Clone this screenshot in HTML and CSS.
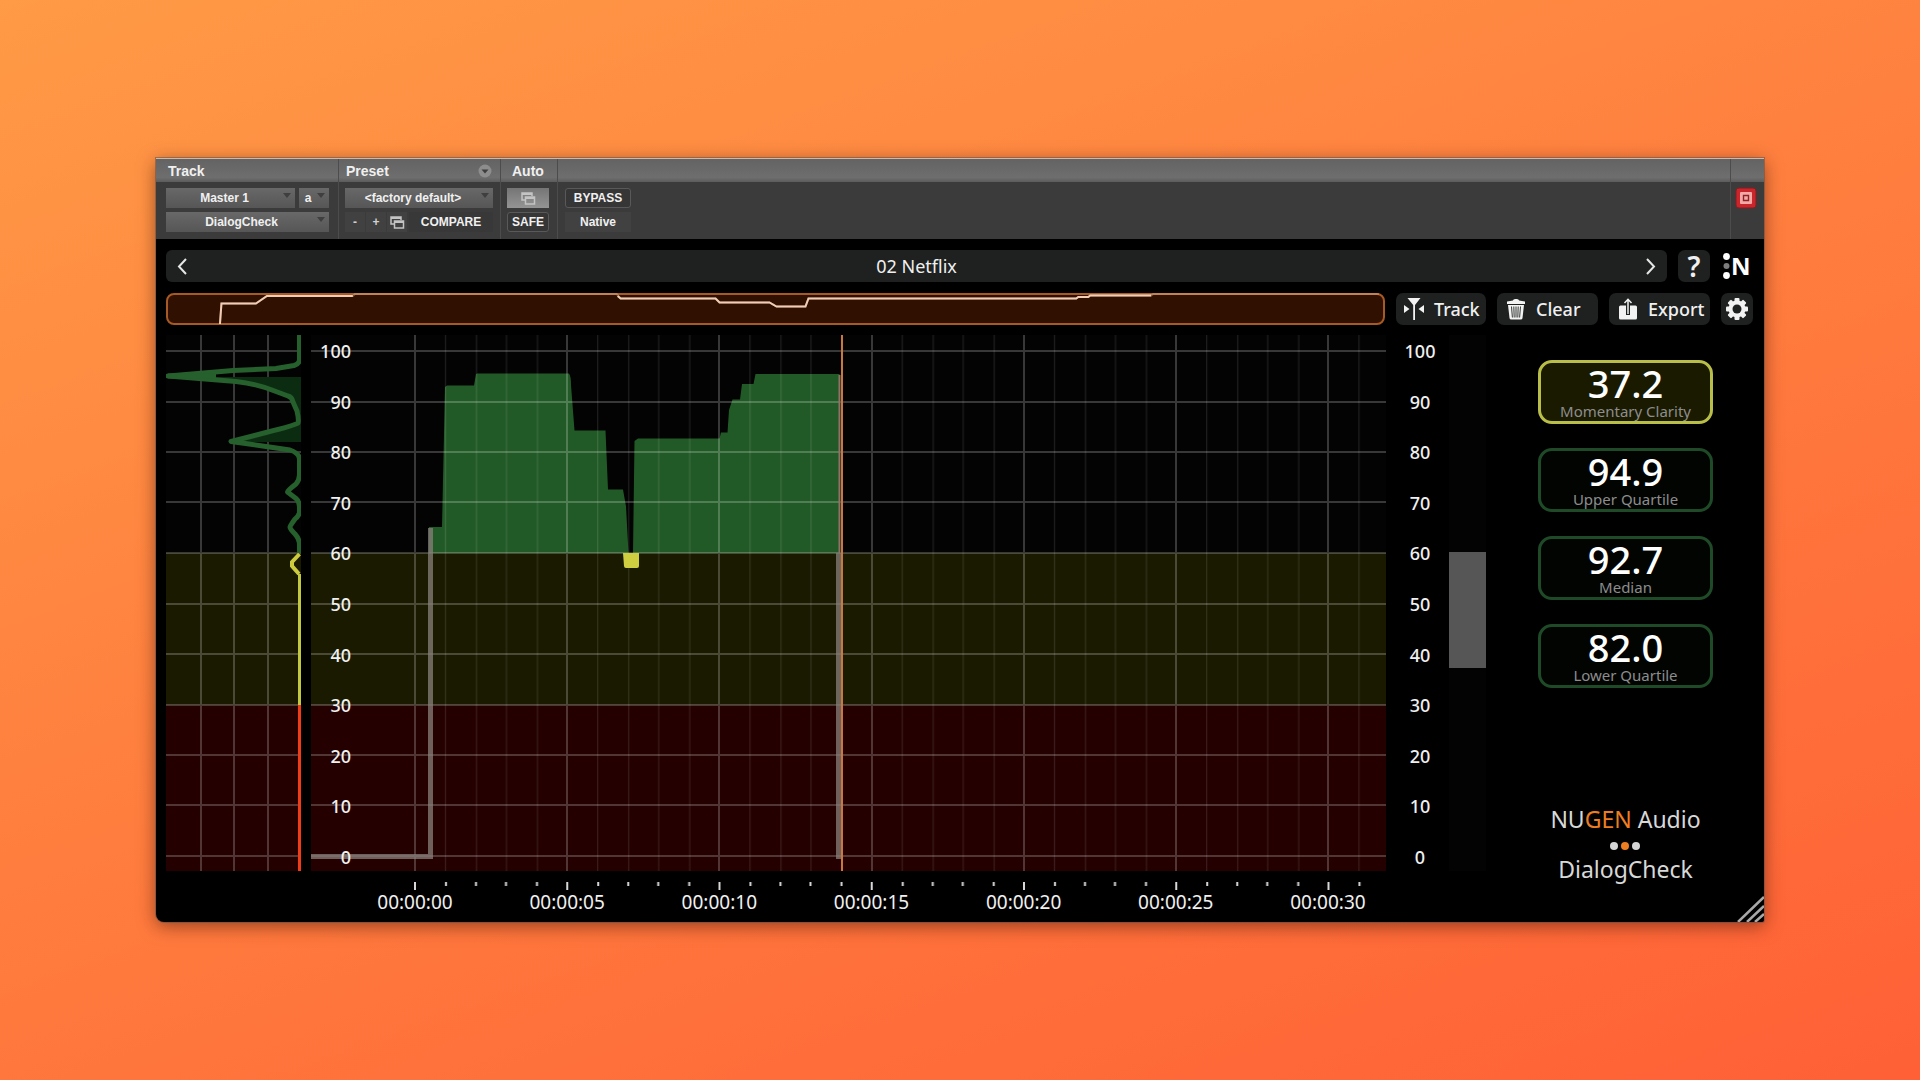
FILE: index.html
```html
<!DOCTYPE html>
<html lang="en">
<head>
<meta charset="utf-8">
<title>DialogCheck</title>
<link rel="stylesheet" href="styles.css">
</head>
<body>
<main class="window">
  <header class="host">
    <section class="host-col host-track">
      <h2 class="host-title">Track</h2>
      <div class="host-body">
        <div class="host-row">
          <span class="pick pick-wide"><select class="host-select" aria-label="Track name"><option>Master 1</option></select></span>
          <span class="pick pick-small"><select class="host-select" aria-label="Insert slot"><option>a</option></select></span>
        </div>
        <div class="host-row">
          <span class="pick pick-wide"><select class="host-select" aria-label="Plug-in"><option>DialogCheck</option></select></span>
        </div>
      </div>
    </section>
    <section class="host-col host-preset">
      <h2 class="host-title">Preset
        <button class="round" aria-label="Preset menu"><svg width="14" height="14" viewBox="0 0 14 14"><circle cx="7" cy="7" r="6.5" fill="#8d8d8d"/><path d="M3.5 5.5h7L7 9.5z" fill="#3d3d3d"/></svg></button>
      </h2>
      <div class="host-body">
        <div class="host-row">
          <span class="pick pick-wide"><select class="host-select" aria-label="Preset"><option>&lt;factory default&gt;</option></select></span>
        </div>
        <div class="host-row host-row-tight">
          <button class="flat step">-</button>
          <button class="flat step">+</button>
          <button class="flat copy" aria-label="Copy settings"><svg width="15" height="13" viewBox="0 0 15 13" fill="none" stroke="#c4c4c4" stroke-width="1.5"><path d="M4 8H1V1h10v3M1 2.2h10"/><path d="M4.5 5h9v7h-9zM4.5 6.2h9"/></svg></button>
          <button class="flat compare">COMPARE</button>
        </div>
      </div>
    </section>
    <section class="host-col host-auto">
      <h2 class="host-title">Auto</h2>
      <div class="host-body">
        <button class="auto-btn" aria-label="Automation"><svg width="15" height="13" viewBox="0 0 15 13" fill="none" stroke="#c4c4c4" stroke-width="1.5"><path d="M4 8H1V1h10v3M1 2.2h10"/><path d="M4.5 5h9v7h-9zM4.5 6.2h9"/></svg></button>
        <button class="framed">SAFE</button>
      </div>
    </section>
    <section class="host-col host-rest">
      <h2 class="host-title"></h2>
      <div class="host-body">
        <button class="framed">BYPASS</button>
        <button class="flat">Native</button>
      </div>
    </section>
    <section class="host-col host-end">
      <h2 class="host-title"></h2>
      <div class="host-body">
        <button class="target" aria-label="Target"><svg width="22" height="22" viewBox="0 0 22 22"><rect x="1" y="1" width="20" height="20" rx="3" fill="#c9252b" stroke="#7c2124"/><rect x="5" y="5" width="12" height="12" rx="1" fill="#f3aaa6"/><path d="M8.5 8.5h5v5h-5z" fill="#f3aaa6" stroke="#8e2226" stroke-width="1.4"/></svg></button>
      </div>
    </section>
  </header>

  <div class="plugin">
    <div class="bar">
      <div class="preset-bar">
        <button class="arrow" aria-label="Previous preset"><svg width="10" height="17" viewBox="0 0 10 17" fill="none" stroke="#e6e6e6" stroke-width="2"><path d="M9 1 2 8.500 9 16"/></svg></button>
        <span class="preset-name">02 Netflix</span>
        <button class="arrow" aria-label="Next preset"><svg width="10" height="17" viewBox="0 0 10 17" fill="none" stroke="#e6e6e6" stroke-width="2"><path d="m1 1 7 7.500L1 16"/></svg></button>
      </div>
      <button class="tool square help">?</button>
      <a class="brand" href="#about" aria-label="NUGEN Audio"><svg width="7" height="26" viewBox="0 0 7 26"><circle cx="3.500" cy="3.500" r="3.400" fill="#fff"/><circle cx="3.500" cy="13" r="3" fill="#7d7d7d"/><circle cx="3.500" cy="22.500" r="3.400" fill="#fff"/></svg><b>N</b></a>
    </div>

    <div class="bar">
      <svg class="overview" viewBox="0 0 1220 32" preserveAspectRatio="none">
        <rect x="1" y="1" width="1218" height="30" rx="7" fill="#301000" stroke="#a85a24" stroke-width="2"/>
        <path d="M54 31 55.500 10.500H90L101 3H187L189 1H451L455 5.500H550L554 9.500H604L611 13.500H640L643 5.500H911L913 4H923L925 2.500H986L988 1H1214" fill="none" stroke="#f2cdb5" stroke-opacity=".35" stroke-width="2"/>
        <path d="M54 31 55.500 10.500H90L101 3H187M452 3L455 5.500H550L554 9.500H604L611 13.500H640L643 5.500H911L913 4H923L925 2.500H986" fill="none" stroke="#f2cdb5" stroke-width="2"/>
      </svg>
      <button class="tool track-tool"><svg width="20" height="22" viewBox="0 0 20 22" fill="#f2f2f2"><path d="M3.500 0h13l-5.500 7v15H9.200V7zM0 7l5.500 4L0 15zM20 7l-5.500 4 5.500 4z"/></svg>Track</button>
      <button class="tool clear-tool"><svg width="20" height="22" viewBox="0 0 20 22"><path d="M7 2.500C7 .5 13 .5 13 2.500l6 1V6H1V3.500zM2 7h16l-1.500 13q0 1.500-2 1.500h-9q-2 0-2-1.500z" fill="#f2f2f2"/><path d="m5.500 8.500.9 11M10 8.500v11m4.500-11-.9 11M7.800 8.500l.4 11M12.200 8.500l-.4 11" stroke="#1e2120" stroke-width=".9"/></svg>Clear</button>
      <button class="tool export-tool"><svg width="20" height="22" viewBox="0 0 20 22"><path d="M2.500 7.500h15q1.500 0 1.500 1.500v11q0 1.500-1.500 1.500h-15Q1 21.500 1 20V9q0-1.500 1.500-1.500z" fill="#f2f2f2"/><path d="M8 6.500h4V17H8z" fill="#1e2120"/><path d="M10 16V2M6.500 5 10 1.300 13.500 5" fill="none" stroke="#f2f2f2" stroke-width="1.500"/></svg>Export</button>
      <button class="tool square" aria-label="Settings"><svg width="22" height="22" viewBox="0 0 22 22"><g fill="#f2f2f2"><rect x="8.500" width="5" height="22" rx="1"/><rect x="8.500" width="5" height="22" rx="1" transform="rotate(45 11 11)"/><rect x="8.500" width="5" height="22" rx="1" transform="rotate(90 11 11)"/><rect x="8.500" width="5" height="22" rx="1" transform="rotate(135 11 11)"/><circle cx="11" cy="11" r="8.500"/></g><circle cx="11" cy="11" r="4.500" fill="#1e2120"/></svg></button>
    </div>

    <div class="display">
      <svg class="histogram" viewBox="0 0 135 536" preserveAspectRatio="none">
        <rect y="218" width="135" height="152" fill="#1a1a00"/>
        <rect y="370" width="135" height="166" fill="#240000"/>
        <path class="grid" d="M0 16H135M0 67H135M0 117H135M0 167H135M0 218H135M0 269H135M0 319H135M0 370H135M0 420H135M0 470H135M0 521H135M35 0V536M68 0V536M102 0V536"/>
        <path d="M135 42H10L70 46.500 90 50 110 56.500 125 61.500 128 67 132 78 133 85 129 90 100 97.500 66 107H135z" fill="#0c2c11"/>
        <path d="M133.500 0V25Q133 29 128 30.500L110 33.500 67 35.500 2 41 70 46.500Q92 49 110 56.500L122 61Q126 62 127 67L131 76Q133 85 132 88 130 90 100 97.500L65 106.500 100 111.500 124 115Q133 118 133.500 124V140Q133 146 130 149 121 156 121.500 157L130 163.500Q133 166 133.500 172V178Q132 182 129 184 124 191 124 192 124 194 129 199 133.500 204 133.500 210V218" fill="none" stroke="#26602d" stroke-width="5" stroke-linejoin="round"/>
        <path d="M2 38.500 50 38v6L2 43.500z" fill="#26602d"/>
        <path d="M133.500 219 126 227V231L133 239" fill="none" stroke="#cccb3d" stroke-width="4"/>
        <path d="M133.500 239V370" stroke="#c3c83f" stroke-width="3"/>
        <path d="M133.500 370V536" stroke="#f23c17" stroke-width="3"/>
      </svg>

      <div class="timeline">
        <div class="plot">
          <svg class="plot-svg" viewBox="0 0 1075 536" preserveAspectRatio="none">
            <defs>
              <pattern id="seconds" x="104" width="152.250" height="536" patternUnits="userSpaceOnUse">
                <path d="M30.500 0V536M61.500 0V536M91.500 0V536M122.500 0V536" stroke="#fff" stroke-opacity=".13"/>
              </pattern>
            </defs>
            <rect y="218" width="1075" height="152" fill="#1a1a00"/>
            <rect y="370" width="1075" height="166" fill="#240000"/>
            <path d="M118 218V192H131L134 52 136 50.500H163L165 39 166 38.500H258Q260 41 260 50L263.500 95.500H294.500L297 154.500H312L315 171.500 317.500 218zM322 218 323.500 106 327 103.500H408.500L410 97.500H416.500L418 75 421.500 64.500H429L431 49H442.500L444.500 39H528.500V218z" fill="#225a27"/>
            <rect x="104" width="971" height="536" fill="url(#seconds)"/>
            <path class="grid" d="M0 16H1075M0 67H1075M0 117H1075M0 167H1075M0 218H1075M0 269H1075M0 319H1075M0 370H1075M0 420H1075M0 470H1075M0 521H1075M104 0V536M256 0V536M408 0V536M561 0V536M713 0V536M865 0V536M1017 0V536"/>
            <path d="M0 521.500H119.500V193M527.500 218V524" fill="none" stroke="#8a807b" stroke-opacity=".75" stroke-width="5"/>
            <path d="M528.500 40V218" stroke="#8a7468" stroke-width="2"/>
            <path d="M531 0V536" stroke="#c87840" stroke-width="2"/>
            <path d="M312 218h16v13q0 2-2 2h-11q-2 0-2-2z" fill="#cfce40"/>
          </svg>
          <ol class="scale scale-left">
            <li>100</li><li>90</li><li>80</li><li>70</li><li>60</li><li>50</li><li>40</li><li>30</li><li>20</li><li>10</li><li>0</li>
          </ol>
        </div>
        <svg class="ticks" viewBox="0 0 1075 8" preserveAspectRatio="none">
          <defs>
            <pattern id="tick" x="103" width="152.250" height="8" patternUnits="userSpaceOnUse">
              <path d="M1 0V8M32 0V4M62 0V4M92 0V4M123 0V4" stroke="#d8d8d8" stroke-width="2"/>
            </pattern>
          </defs>
          <rect x="103" width="972" height="8" fill="url(#tick)"/>
        </svg>
        <ol class="times">
          <li>00:00:00</li><li>00:00:05</li><li>00:00:10</li><li>00:00:15</li><li>00:00:20</li><li>00:00:25</li><li>00:00:30</li>
        </ol>
      </div>

      <ol class="scale scale-right">
        <li>100</li><li>90</li><li>80</li><li>70</li><li>60</li><li>50</li><li>40</li><li>30</li><li>20</li><li>10</li><li>0</li>
      </ol>
      <div class="meter"><div class="meter-fill"></div></div>

      <aside class="readouts">
        <div class="readout readout-now"><strong>37.2</strong><span>Momentary Clarity</span></div>
        <div class="readout"><strong>94.9</strong><span>Upper Quartile</span></div>
        <div class="readout"><strong>92.7</strong><span>Median</span></div>
        <div class="readout"><strong>82.0</strong><span>Lower Quartile</span></div>
        <div class="logo">
          <div>NU<em>GEN</em> Audio</div>
          <svg class="logo-dots" width="30" height="8" viewBox="0 0 30 8"><circle cx="4" cy="4" r="4" fill="#d5d5d5"/><circle cx="15" cy="4" r="4" fill="#ee7d22"/><circle cx="26" cy="4" r="4" fill="#d5d5d5"/></svg>
          <div>DialogCheck</div>
        </div>
      </aside>
    </div>
  </div>
  <svg class="grip" width="27" height="27" viewBox="0 0 27 27" stroke="#a8a8a8" stroke-width="2.500"><path d="M1 27 27 2M10 27 27 11M18 27l9-8"/></svg>
</main>
</body>
</html>
```
FILE: styles.css
```css
* { box-sizing: border-box; }

body {
  margin: 0;
  min-height: 100vh;
  padding: 158px 156px;
  background: linear-gradient(160deg, #ff9a46, #ff6036);
  font-family: "Noto Sans", "Open Sans", sans-serif;
  color: #f0f0f0;
}

button, select {
  margin: 0;
  padding: 0;
  border: 0;
  background: none;
  color: inherit;
  font: inherit;
}

h2, ol { margin: 0; padding: 0; list-style: none; font-size: inherit; }
svg { display: block; flex-shrink: 0; }
em { font-style: normal; color: #ee7d22; }

.window {
  position: relative;
  background: #000;
  border-radius: 0 0 2px 8px;
  box-shadow: 0 0 0 1px rgba(90, 80, 80, .5), 0 4px 18px rgba(60, 20, 10, .55);
}

/* Host strip */
.host {
  display: flex;
  border-top: 1px solid #d0b8a8;
  background: #3b3b3b;
  font: bold 12px/20px "Liberation Sans", Arial, sans-serif;
}
.host-col { border-left: 1px solid #4c4c4c; }
.host-track { width: 182px; border-left: 0; }
.host-preset { width: 162px; }
.host-auto { width: 57px; }
.host-rest { flex: 1; }
.host-end { width: 34px; }
.host-title {
  display: flex;
  align-items: center;
  justify-content: space-between;
  height: 23px;
  padding: 1px 8px 0 12px;
  background: linear-gradient(#636363, #6e6e6e 80%, #5c5c5c);
  font-size: 14px;
}
.host-preset .host-title { padding-left: 7px; }
.host-body {
  display: flex;
  flex-direction: column;
  gap: 4px;
  padding: 6px 7px 7px;
}
.host-track .host-body { padding-left: 10px; padding-right: 9px; }
.host-preset .host-body { padding-left: 6px; }
.host-row { display: flex; gap: 4px; }
.host-row-tight { gap: 1px; }
.pick { position: relative; display: flex; }
.pick::after {
  content: "";
  position: absolute;
  top: 5px;
  right: 4px;
  border: 4px solid transparent;
  border-top: 5px solid #3f3f3f;
  border-bottom: 0;
  pointer-events: none;
}
.pick-wide { flex: 1; }
.pick-small { width: 30px; }
.host-select {
  appearance: none;
  width: 100%;
  height: 20px;
  padding-right: 12px;
  background: linear-gradient(#686868, #565656);
  text-align-last: center;
}
.flat { height: 20px; background: #414141; }
.step { width: 20px; color: #d0d0d0; }
.copy { display: grid; place-items: center; width: 20px; }
.compare { flex: 1; margin-left: 1px; background: #383838; }
.auto-btn {
  display: grid;
  place-items: center;
  height: 20px;
  background: linear-gradient(#757575, #949494);
}
.framed {
  height: 20px;
  border: 1px solid #595959;
  border-radius: 3px;
  background: #363636;
  line-height: 18px;
}
.host-auto .host-body { padding-left: 6px; padding-right: 8px; }
.host-rest .host-body { align-items: flex-start; }
.host-rest button { width: 66px; }
.host-end .host-body { padding: 5px 4px; }
.host-auto .host-title { padding-left: 11px; }

/* Plug-in */
.plugin { padding: 11px 11px 0 10px; }
.bar { display: flex; gap: 11px; height: 32px; margin-bottom: 11px; }
.preset-bar {
  flex: 1;
  display: flex;
  align-items: center;
  justify-content: space-between;
  padding: 0 11px;
  border-radius: 6px;
  background: #1e2120;
  font-size: 18px;
}
.tool {
  display: flex;
  align-items: center;
  gap: 10px;
  padding: 0 9px;
  border-radius: 7px;
  background: #1e2120;
  font-size: 18px;
  font-weight: 500;
}
.track-tool { width: 90px; padding: 0 8px; }
.clear-tool { width: 101px; }
.export-tool { width: 101px; }
.square { justify-content: center; width: 32px; padding: 0; }
.help { font-size: 28px; font-weight: 600; line-height: 32px; }
.brand {
  display: flex;
  align-items: center;
  gap: 1px;
  width: 32px;
  padding-left: 2px;
  color: #fff;
  font-size: 24px;
  line-height: 32px;
  text-decoration: none;
}
.overview { flex: 1; min-width: 0; height: 32px; }

.display { display: flex; margin-top: -1px; }
.grid { fill: none; stroke: #fff; stroke-opacity: .21; stroke-width: 2; }
.histogram { width: 135px; height: 536px; margin-right: 10px; background: #020302; }
.timeline { flex: 1; min-width: 0; padding-bottom: 8px; }
.plot { position: relative; }
.plot-svg { width: 100%; height: 536px; background: #020302; }
.scale {
  display: flex;
  flex-direction: column;
  justify-content: space-between;
  height: 530px;
  font-size: 18px;
  font-weight: 500;
  line-height: 24px;
}
.scale-left {
  position: absolute;
  top: 4px;
  left: 0;
  width: 40px;
  text-align: right;
}
.scale-right { width: 58px; margin: 4px 0 0 5px; text-align: center; }
.ticks { width: 100%; height: 8px; margin-top: 11px; }
.times {
  display: flex;
  justify-content: space-between;
  margin: 0 20px 0 66px;
  font-size: 19px;
  line-height: 24px;
}
.times li { width: 76px; text-align: center; }
.meter { width: 37px; height: 536px; padding-top: 217px; background: #030303; }
.meter-fill { height: 116px; background: #565656; }

.readouts {
  display: flex;
  flex-direction: column;
  align-items: center;
  gap: 24px;
  width: 267px;
  padding: 25px 0 0 12px;
}
.readout {
  display: flex;
  flex-direction: column;
  align-items: center;
  width: 175px;
  height: 64px;
  border: 3px solid #1f4a28;
  border-radius: 14px;
  background: #020402;
}
.readout-now { border-color: #b9be48; background: #1a1a00; }
.readout strong { color: #fff; font-size: 38px; font-weight: 500; line-height: 40px; }
.readout span { color: #8d8d8d; font-size: 15px; line-height: 16px; }
.logo {
  display: flex;
  flex-direction: column;
  align-items: center;
  margin-top: 92px;
  color: #d8d8d8;
  font-size: 23px;
  line-height: 30px;
}
.logo-dots { margin: 8px 0 4px; }
.grip { position: absolute; right: 0; bottom: 0; }
```
